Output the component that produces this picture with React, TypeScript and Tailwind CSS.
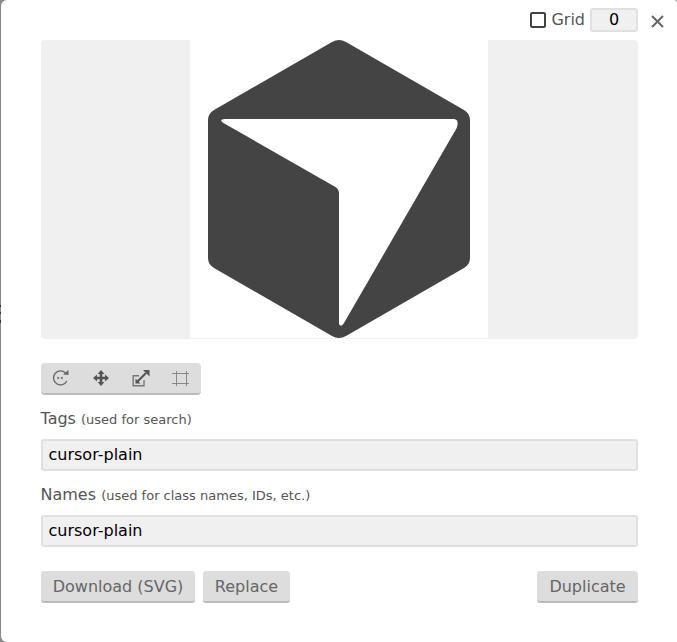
const ff = { fontFamily: '"DejaVu Sans", sans-serif' };

function Hex() {
  return (
    <svg width="298" height="299" viewBox="0 0 298 299" className="block overflow-visible">
      <path
        fillRule="evenodd"
        fill="#444444"
        d="M142 2 Q149 -2 156 2 L274 70 Q280 73.6 280 80 L280 218 Q280 224.4 274 228 L156 296 Q149 300 142 296 L24 228 Q18 224.4 18 218 L18 80 Q18 73.6 24 70 Z M35 79 L264 79 Q269.5 79.5 266.7 88 L154 283 Q151 288 149 284 L149 153 Q149 149 145 146.7 L33 82.7 Q30 80.5 32 79.5 Z"
      />
    </svg>
  );
}

function Tools() {
  return (
    <div className="flex h-[32px] w-[160px] items-center justify-around rounded-[4px] border-b-2 border-[#bbbbbb] bg-[#dddddd] px-0">
      <svg width="20" height="20" viewBox="0 0 20 20" fill="none" stroke="#666666" strokeWidth="1.3">
        <path d="M14.5 5 A7 7 0 1 0 15.8 13" />
        <path d="M12 6.5 L17.5 7 L17.5 2 Z" fill="#666666" stroke="none" />
        <path d="M6.5 8.5 L8.5 10 L6.5 11.5 Z M11.5 8.5 L9.5 10 L11.5 11.5 Z" fill="#555555" stroke="none" />
      </svg>
      <svg width="20" height="20" viewBox="0 0 20 20" fill="#555555">
        <path d="M10 2 L13.4 6 L11.3 6 L11.3 8.7 L14 8.7 L14 6.6 L18 10 L14 13.4 L14 11.3 L11.3 11.3 L11.3 14 L13.4 14 L10 18 L6.6 14 L8.7 14 L8.7 11.3 L6 11.3 L6 13.4 L2 10 L6 6.6 L6 8.7 L8.7 8.7 L8.7 6 L6.6 6 Z" />
      </svg>
      <svg width="20" height="20" viewBox="0 0 20 20" fill="none" stroke="#777777" strokeWidth="1.4">
        <path d="M8 7.7 L2.2 7.7 L2.2 17.8 L13 17.8 L13 12" />
        <path d="M6 14 L15 5" stroke="#555555" strokeWidth="2.2" />
        <path d="M12 2 L18.5 2 L18.5 8.5 Z" fill="#555555" stroke="none" />
        <path d="M4.5 15.5 L4.5 10.5 L9.5 15.5 Z" fill="#555555" stroke="none" />
      </svg>
      <svg width="20" height="20" viewBox="0 0 20 20" fill="none" stroke="#888888" strokeWidth="1">
        <path d="M5.5 3 L5.5 18 M15.5 3 L15.5 18 M1 5.5 L18 5.5 M1 15.5 L18 15.5" />
      </svg>
    </div>
  );
}

function Field({ label, hint, value }: { label: string; hint: string; value: string }) {
  return (
    <div className="flex flex-col">
      <div className="-ml-[0.5px] h-[20px] text-[16px] leading-[20px] text-[#555555]">
        {label} <span className="text-[13px]">{hint}</span>
      </div>
      <div className="mt-[10px] flex h-[32px] items-center rounded-[3px] border-2 border-[#e0e0e0] bg-[#f0f0f0] px-[5.5px] text-[16px] text-black">
        {value}
      </div>
    </div>
  );
}

function Btn({ children, className }: { children: string; className: string }) {
  return (
    <div className={"flex h-[32px] items-center justify-center rounded-[3px] border-b-2 border-[#bbbbbb] bg-[#dddddd] pt-[1px] text-[16px] text-[#666666] " + className}>
      {children}
    </div>
  );
}

export default function App() {
  return (
    <div className="relative h-[642px] w-[677px] overflow-hidden bg-[#888888] pl-[1px]" style={ff}>
      <span className="absolute left-0 top-[305px] h-[2px] w-[1px] bg-[#333333]" />
      <span className="absolute left-0 top-[312px] h-[2px] w-[1px] bg-[#333333]" />
      <span className="absolute left-0 top-[320px] h-[3px] w-[1px] bg-[#333333]" />
      <div className="flex h-full flex-col rounded-bl-[6px] rounded-tl-[6px] rounded-tr-[3px] bg-white pl-[40px] pr-[39px]">
        <div className="-mr-[27px] flex h-[40px] shrink-0 items-center justify-end">
          <div className="mr-[5px] h-[16px] w-[16px] rounded-[2px] border-2 border-[#444444]" />
          <span className="text-[16px] text-[#555555]">Grid</span>
          <div className="ml-[5px] flex h-[24px] w-[48px] items-center justify-center rounded-[3px] border-2 border-[#e0e0e0] bg-[#f0f0f0] text-[16px] text-black">0</div>
          <svg className="ml-[12px] mt-[2px]" width="15" height="15" viewBox="0 0 15 15" stroke="#666666" strokeWidth="2"><path d="M2 2 L13 13 M13 2 L2 13" /></svg>
        </div>
        <div className="h-[299px] w-[597px] shrink-0 rounded-[4px] bg-[#f0f0f0]">
          <div className="ml-[149px] h-[298px] w-[298px] bg-white"><Hex /></div>
        </div>
        <div className="mt-[24px]"><Tools /></div>
        <div className="mt-[14px]"><Field label="Tags" hint="(used for search)" value="cursor-plain" /></div>
        <div className="mt-[14px]"><Field label="Names" hint="(used for class names, IDs, etc.)" value="cursor-plain" /></div>
        <div className="mt-[24px] flex gap-[8px]">
          <Btn className="w-[154px]">Download (SVG)</Btn>
          <Btn className="w-[87px]">Replace</Btn>
          <Btn className="ml-auto w-[101px]">Duplicate</Btn>
        </div>
      </div>
    </div>
  );
}
